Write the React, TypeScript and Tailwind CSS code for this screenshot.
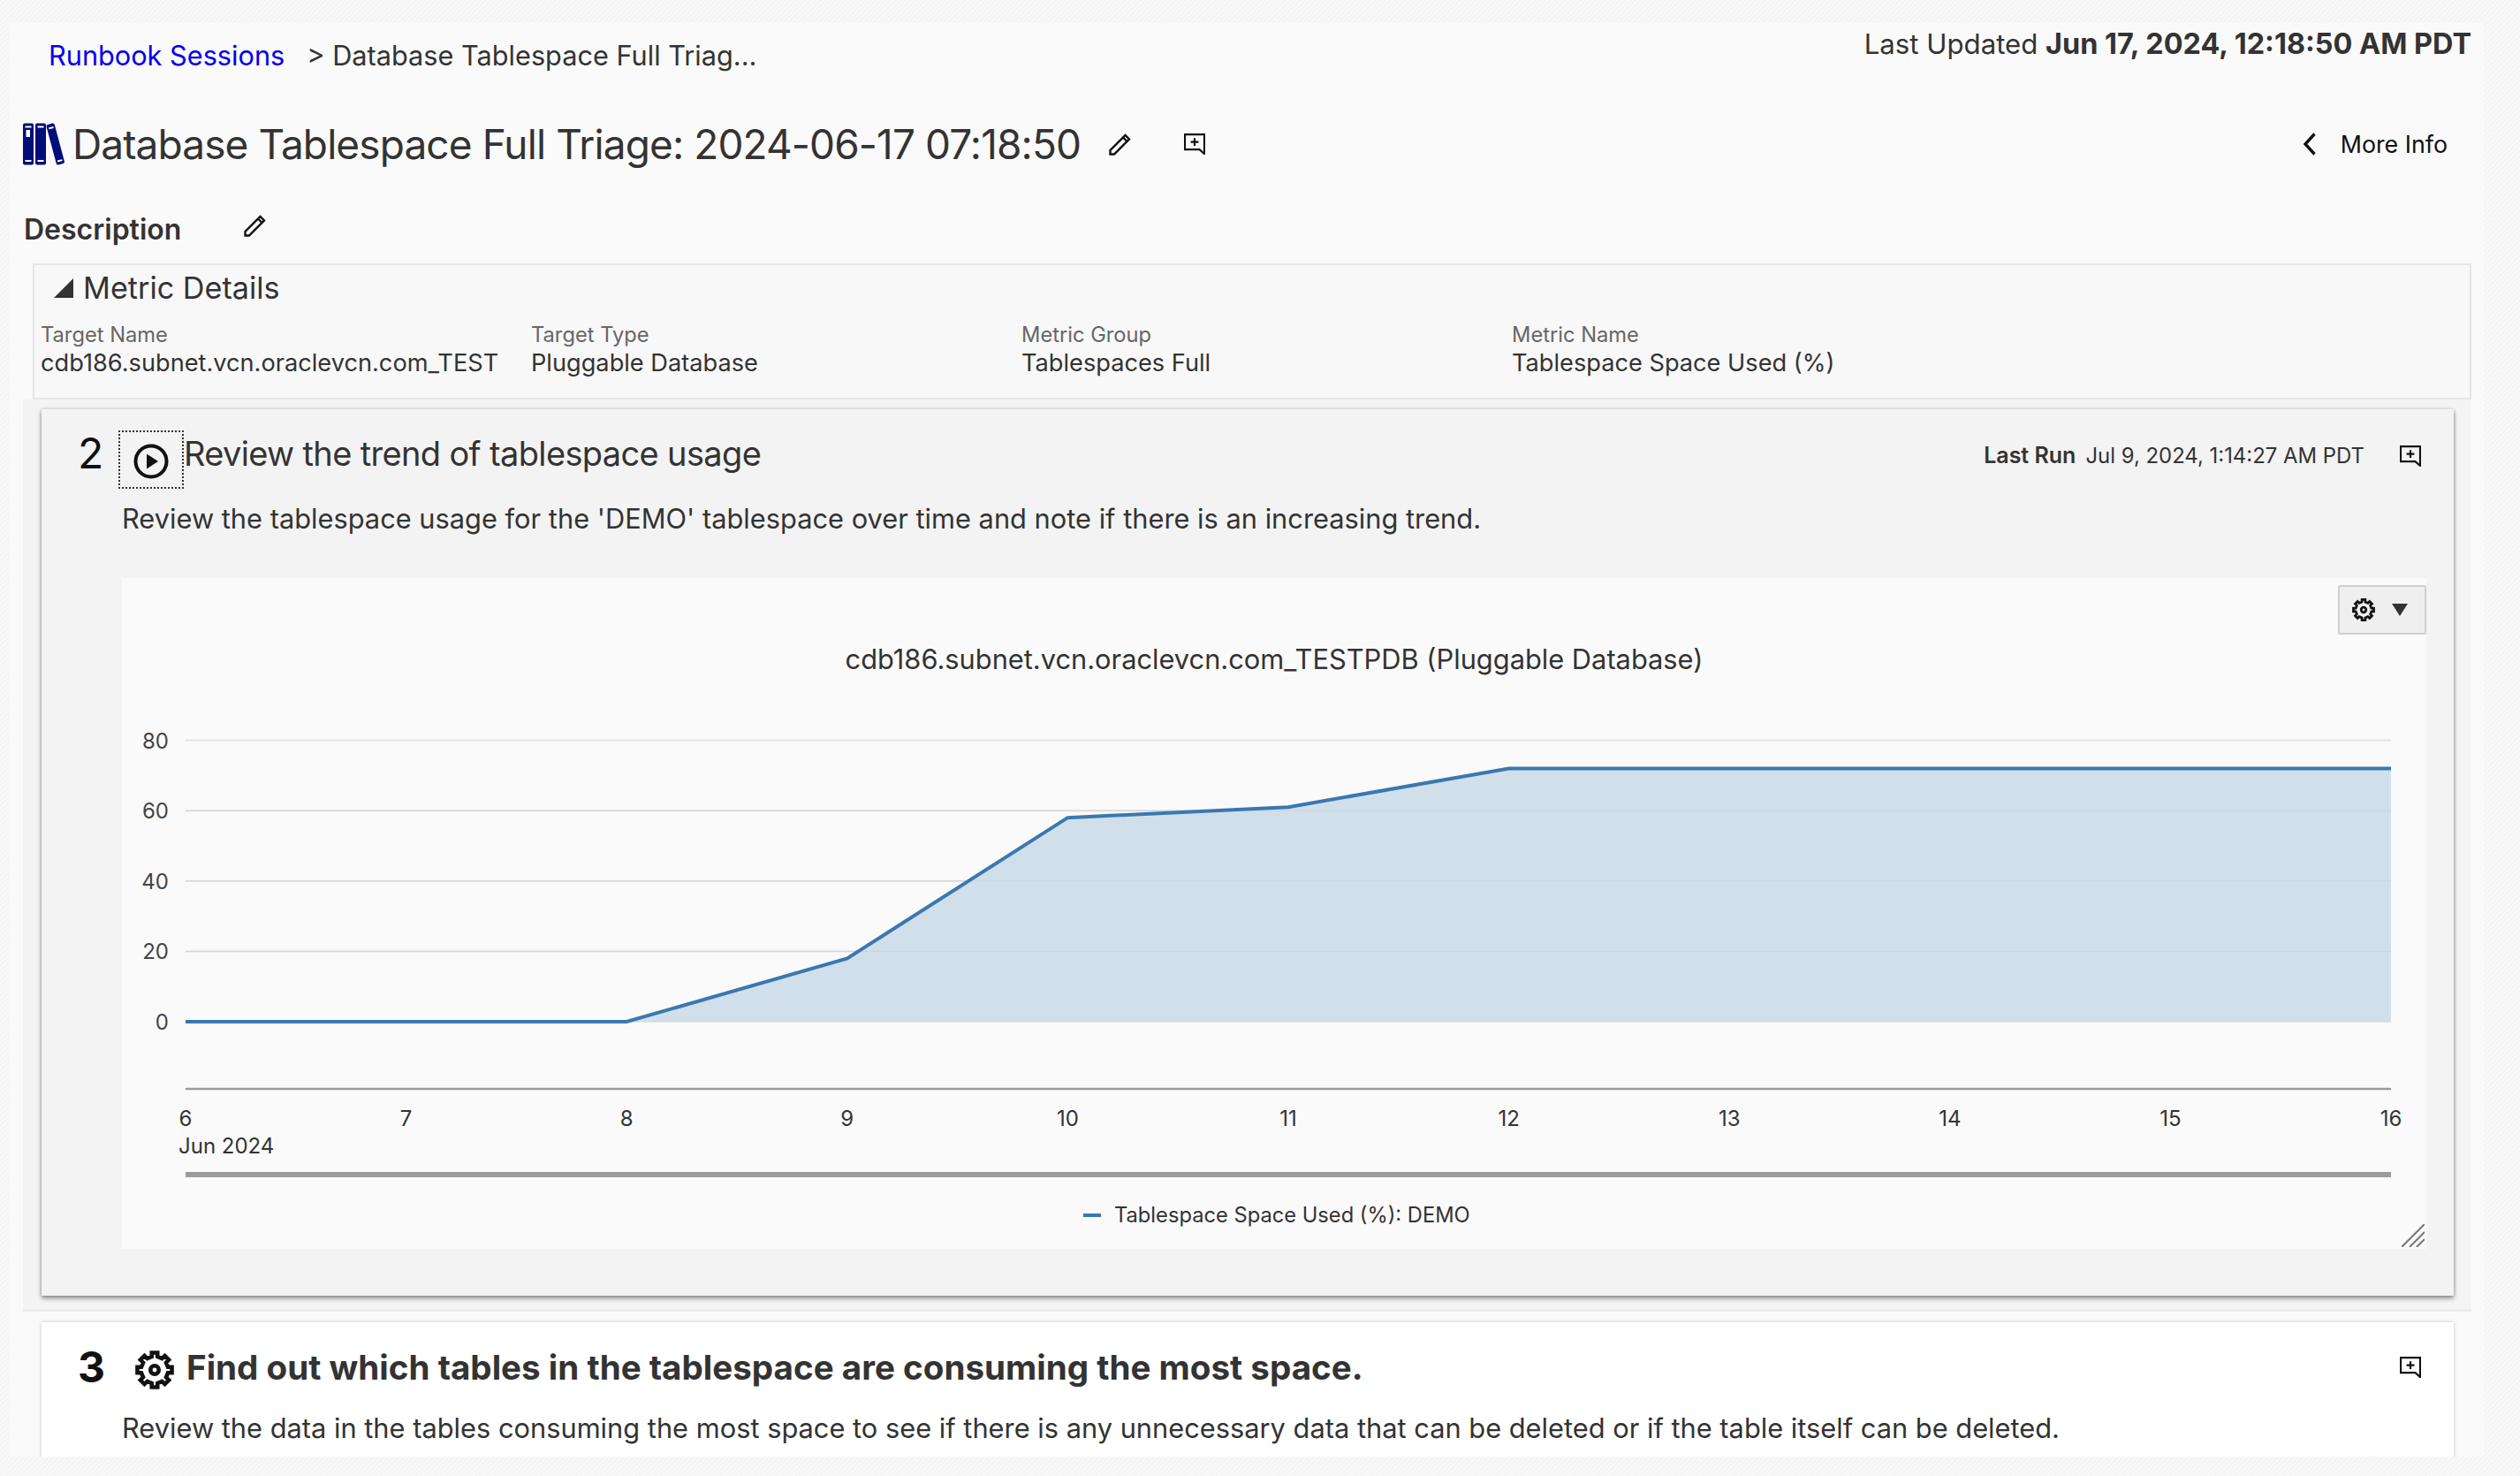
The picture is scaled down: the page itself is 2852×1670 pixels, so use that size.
const gearPath = (() => {
  const pts: string[] = [];
  const n = 8;
  for (let i = 0; i < n; i++) {
    const a = (i / n) * Math.PI * 2;
    const w = Math.PI / n;
    const p = (r: number, t: number) =>
      `${(12 + r * Math.cos(t)).toFixed(2)} ${(12 + r * Math.sin(t)).toFixed(2)}`;
    pts.push(p(8.4, a - w * 0.55), p(10.8, a - w * 0.42), p(10.8, a + w * 0.42), p(8.4, a + w * 0.55));
  }
  return `M${pts.join("L")}Z`;
})();

function Gear({ className }: { className: string }) {
  return (
    <svg viewBox="0 0 24 24" fill="none" stroke="#111" strokeWidth="2.5" className={className} aria-hidden="true">
      <path d={gearPath} strokeLinejoin="miter" />
      <circle cx="12" cy="12" r="2.6" />
    </svg>
  );
}

function CommentPlus({ className = "" }: { className?: string }) {
  return (
    <svg viewBox="0 0 24 24" fill="none" className={`h-6 w-6 shrink-0 ${className}`} aria-hidden="true">
      <path d="M1 1.2H23V23L17.5 18.2H1Z" stroke="#111" strokeWidth="2.2" />
      <path d="M12 5.2V14M7.6 9.6H16.4" stroke="#111" strokeWidth="2.2" />
    </svg>
  );
}

function Pencil({ className }: { className: string }) {
  return (
    <svg viewBox="0 0 26 26" fill="none" className={className} aria-hidden="true">
      <path d="M1.5 24.5V20L18.5 3L23 7.5L6 24.5Z" stroke="#111" strokeWidth="2.4" />
      <path d="M16 5.5L20.5 10" stroke="#111" strokeWidth="2.4" />
    </svg>
  );
}

function Books() {
  return (
    <svg viewBox="0 0 48 48" className="h-12 w-12 shrink-0" aria-hidden="true">
      <rect x="0" y="0.5" width="12" height="47" rx="2" fill="#000e7a" />
      <rect x="14" y="0.5" width="12" height="47" rx="2" fill="#000e7a" />
      <rect x="2.5" y="3.5" width="7" height="2" fill="#fff" />
      <rect x="3.5" y="8" width="4.5" height="8" fill="#fff" />
      <rect x="2.5" y="42" width="7" height="2" fill="#fff" />
      <rect x="16.5" y="3.5" width="7" height="2" fill="#fff" />
      <rect x="16.5" y="42" width="7" height="2" fill="#fff" />
      <g transform="rotate(-15 36.7 24)">
        <rect x="32" y="0.5" width="9.5" height="47" rx="2" fill="#000e7a" />
        <rect x="34" y="4" width="5.5" height="2" fill="#fff" />
        <rect x="34" y="42.5" width="5.5" height="2" fill="#fff" />
      </g>
    </svg>
  );
}

const X0 = 72;
const STEP = 249.6;
const Y0 = 502;
const UNIT = 3.98;
const data: [number, number][] = [
  [6, 0],
  [7, 0],
  [8, 0],
  [9, 18],
  [10, 58],
  [11, 61],
  [12, 72],
  [16, 72],
];
const px = (d: number) => X0 + (d - 6) * STEP;
const py = (v: number) => Y0 - v * UNIT;
const line = data.map(([d, v]) => `${px(d)},${py(v)}`).join(" ");
const area = `${line} ${px(16)},${Y0} ${px(6)},${Y0}`;
const textFont = "Inter, sans-serif";

function Chart() {
  return (
    <svg viewBox="0 0 2608 759" className="block h-[759px] w-[2608px]" fontFamily={textFont}>
      <text x="1304" y="103" textAnchor="middle" fontSize="30.8" fill="#333">
        cdb186.subnet.vcn.oraclevcn.com_TESTPDB (Pluggable Database)
      </text>
      {[0, 20, 40, 60, 80].map((v) => (
        <g key={v}>
          <line x1={X0} x2={px(16)} y1={py(v)} y2={py(v)} stroke="#e2e2e2" strokeWidth="2" />
          <text x="53" y={py(v) + 9} textAnchor="end" fontSize="24" fill="#444">
            {v}
          </text>
        </g>
      ))}
      <polygon points={area} fill="#d1dfeb" />
      {[20, 40, 60].map((v) => (
        <line key={v} x1={px(6)} x2={px(16)} y1={py(v)} y2={py(v)} stroke="#c6d2dc" strokeWidth="1" opacity="0.7" />
      ))}
      <polyline points={line} fill="none" stroke="#3a78b0" strokeWidth="4" />
      <line x1={X0} x2={px(16)} y1="578" y2="578" stroke="#9b9b9b" strokeWidth="2.5" />
      {[6, 7, 8, 9, 10, 11, 12, 13, 14, 15, 16].map((d) => (
        <text key={d} x={px(d)} y="620" textAnchor="middle" fontSize="24" fill="#333">
          {d}
        </text>
      ))}
      <text x="64" y="651" fontSize="24" fill="#333">
        Jun 2024
      </text>
      <rect x={X0} y="672" width={STEP * 10} height="6" fill="#9b9b9b" />
      <line x1="1088" x2="1108" y1="721" y2="721" stroke="#3a78b0" strokeWidth="4" />
      <text x="1123" y="729" fontSize="23.7" fill="#333">
        Tablespace Space Used (%): DEMO
      </text>
    </svg>
  );
}

const metrics = [
  ["Target Name", "cdb186.subnet.vcn.oraclevcn.com_TEST"],
  ["Target Type", "Pluggable Database"],
  ["Metric Group", "Tablespaces Full"],
  ["Metric Name", "Tablespace Space Used (%)"],
];

export default function App() {
  return (
    <div className="h-[1670px] w-[2852px] overflow-hidden bg-[repeating-linear-gradient(135deg,#f4f4f4_0px,#f4f4f4_2px,#f9f9f9_2px,#f9f9f9_4px)] pl-[11px] pr-[41px] pt-[26px] font-['Inter',sans-serif] text-[#333]">
      <div className="flex h-[1622px] flex-col overflow-hidden bg-[#fafafa]">
        <div className="flex h-[62px] shrink-0 items-start justify-between pr-[14px]">
          <div className="mt-[18px] flex items-center pl-[44px] text-[30.7px] leading-[38px]">
            <span className="text-[#0000ee]">Runbook Sessions</span>
            <span className="ml-[25px]">&gt; Database Tablespace Full Triag...</span>
          </div>
          <div className="mt-[5px] text-[31.2px] leading-[38px]">
            Last Updated <span className="text-[32.4px] font-bold">Jun 17, 2024, 12:18:50 AM PDT</span>
          </div>
        </div>

        <div className="mt-[50px] flex h-[50px] shrink-0 items-center pl-[15px]">
          <Books />
          <h1 className="ml-[8px] text-[46px] leading-[50px] font-normal tracking-[-0.9px] whitespace-nowrap">
            Database Tablespace Full Triage: 2024-06-17 07:18:50
          </h1>
          <Pencil className="ml-[32px] h-[26px] w-[26px]" />
          <CommentPlus className="ml-[59px]" />
          <div className="ml-auto flex items-center pr-[41px] text-[26.8px] text-[#111]">
            <svg viewBox="0 0 16 26" className="mr-[27px] h-[26px] w-[16px]" fill="none" stroke="#111" strokeWidth="3.4">
              <path d="M13.5 1.5L3 13L13.5 24.5" />
            </svg>
            More Info
          </div>
        </div>

        <div className="mt-[52px] flex h-[40px] shrink-0 items-center pl-[16px]">
          <span className="text-[32px] font-semibold">Description</span>
          <Pencil className="ml-[71px] h-[26px] w-[26px] -translate-y-[5px]" />
        </div>

        <div className="mt-[18px] ml-[26px] mr-[14px] h-[154px] shrink-0 border-2 border-[#e5e5e5] bg-[#f8f8f8] pl-[7px]">
          <div className="mt-[11px] flex items-center text-[34.2px] leading-[30px]">
            <span className="ml-[15px] h-0 w-0 border-b-[22px] border-l-[22px] border-b-[#333] border-l-transparent" />
            <span className="ml-[11px]">Metric Details</span>
          </div>
          <div className="mt-[22px] grid grid-cols-[555px_555px_555px_1fr]">
            {metrics.map(([label, value]) => (
              <div key={label} className="whitespace-nowrap">
                <div className="text-[23.7px] leading-[32px] text-[#666]">{label}</div>
                <div className="text-[27.2px] leading-[32px]">{value}</div>
              </div>
            ))}
          </div>
        </div>

        <div className="ml-[15px] mr-[14px] h-[1032px] shrink-0 border-b-[3px] border-[#ebebeb] bg-[#f4f4f4] pl-[21px] pr-[20px] pt-[11px]">
          <div className="relative h-[1003px] bg-[#f3f3f3] pl-[41px] pr-[37px] pt-[24px] shadow-[0_3px_5px_rgba(0,0,0,0.4),0_0_4px_rgba(0,0,0,0.18)]">
            <div className="flex items-start">
              <span className="w-[46px] text-[48px] leading-[52px] text-[#111]">2</span>
              <span className="flex h-[66px] w-[74px] items-center justify-center border-2 border-dotted border-[#333]">
                <svg viewBox="0 0 40 40" className="mt-[3px] h-[40px] w-[40px]" aria-hidden="true">
                  <circle cx="20" cy="20" r="17.5" fill="none" stroke="#111" strokeWidth="4" />
                  <path d="M15 11.5L28 20L15 28.5Z" fill="#111" />
                </svg>
              </span>
              <span className="text-[38px] leading-[52px] tracking-[-0.65px] whitespace-nowrap">Review the trend of tablespace usage</span>
              <span className="ml-auto mt-[10px] text-[23.9px] leading-[36px] whitespace-nowrap">
                <b className="text-[25px] font-semibold">Last Run</b>
                <span className="ml-[11px]">Jul 9, 2024, 1:14:27 AM PDT</span>
              </span>
              <CommentPlus className="ml-[40px] mt-[17px]" />
            </div>
            <p className="mt-[16px] pl-[50px] text-[30.8px] leading-[36px] whitespace-nowrap">
              Review the tablespace usage for the 'DEMO' tablespace over time and note if there is an increasing trend.
            </p>
            <div className="relative mt-[49px] ml-[50px] h-[759px] w-[2608px] bg-[#fafafa]">
              <Chart />
              <button className="absolute right-0 top-[8px] flex h-[56px] w-[100px] items-center gap-[19px] rounded-[2px] border-2 border-[#d0d0d0] bg-[#efefef] pl-[14px]">
                <Gear className="h-[26px] w-[26px]" />
                <span className="h-0 w-0 border-x-[9px] border-t-[14px] border-x-transparent border-t-[#333]" />
              </button>
              <svg viewBox="0 0 26 26" className="absolute bottom-[2px] right-[2px] h-[26px] w-[26px]" stroke="#777" strokeWidth="2" aria-hidden="true">
                <path d="M0 26L26 0M9 26L26 9M17 26L26 17" />
              </svg>
            </div>
          </div>
        </div>

        <div className="mt-[12px] ml-[36px] mr-[34px] h-[240px] shrink-0 bg-white pl-[41px] pr-[37px] pt-[25px] shadow-[0_0_4px_rgba(0,0,0,0.22)]">
          <div className="flex items-center">
            <span className="w-[66px] text-[48px] leading-[52px] font-bold text-[#111]">3</span>
            <Gear className="ml-[-1px] h-[44px] w-[44px] translate-y-[3px]" />
            <span className="ml-[14px] text-[38.6px] leading-[52px] font-bold whitespace-nowrap">
              Find out which tables in the tablespace are consuming the most space.
            </span>
            <CommentPlus className="ml-auto" />
          </div>
          <p className="mt-[25px] pl-[50px] text-[30.8px] leading-[36px] whitespace-nowrap">
            Review the data in the tables consuming the most space to see if there is any unnecessary data that can be deleted or if the table itself can be deleted.
          </p>
        </div>
      </div>
    </div>
  );
}
